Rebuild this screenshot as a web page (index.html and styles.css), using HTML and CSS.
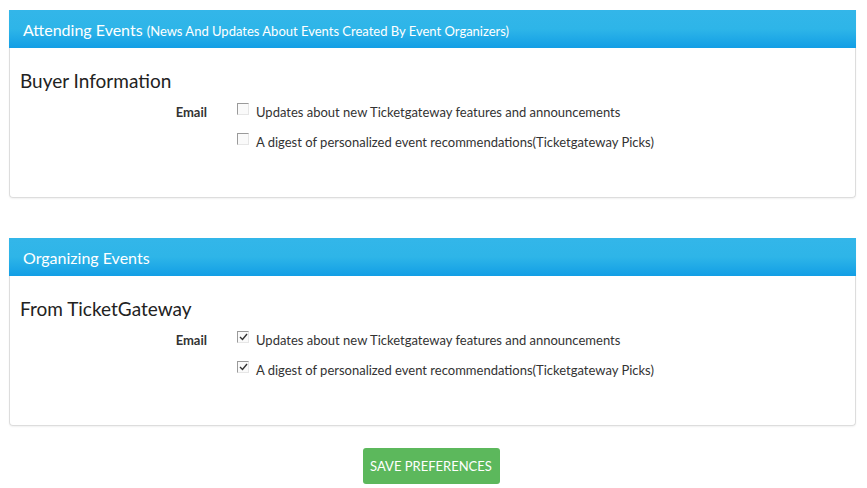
FILE: index.html
```html
<!DOCTYPE html>
<html>
<head>
  <meta charset="UTF-8">
  <title>Notification Preferences</title>
  <link rel="stylesheet" href="styles.css">
</head>
<body>
  <div class="page">
    <div class="panel">
      <div class="panel_head">
        Attending Events <small>(News And Updates About Events Created By Event Organizers)</small>
      </div>
      <div class="panel_body">
        <h3>Buyer Information</h3>
        <div class="pref_row">
          <div class="pref_label">Email</div>
          <div class="pref_opts">
            <label class="opt"><span class="box"></span>Updates about new Ticketgateway features and announcements</label>
            <label class="opt"><span class="box"></span>A digest of personalized event recommendations(Ticketgateway Picks)</label>
          </div>
        </div>
      </div>
    </div>

    <div class="panel">
      <div class="panel_head">Organizing Events</div>
      <div class="panel_body">
        <h3>From TicketGateway</h3>
        <div class="pref_row">
          <div class="pref_label">Email</div>
          <div class="pref_opts">
            <label class="opt"><span class="box"><svg width="9" height="8" viewBox="0 0 9 8"><path d="M1 4 L3.5 6.5 L8 1" fill="none" stroke="#333" stroke-width="1.4"/></svg></span>Updates about new Ticketgateway features and announcements</label>
            <label class="opt"><span class="box"><svg width="9" height="8" viewBox="0 0 9 8"><path d="M1 4 L3.5 6.5 L8 1" fill="none" stroke="#333" stroke-width="1.4"/></svg></span>A digest of personalized event recommendations(Ticketgateway Picks)</label>
          </div>
        </div>
      </div>
    </div>

    <div class="actions">
      <button class="btn_save">SAVE PREFERENCES</button>
    </div>
  </div>
</body>
</html>
```

FILE: styles.css
```css
body {
	margin: 0;
	font-family: "Lato", "Open Sans", sans-serif;
	color: #333;
	background: #fff;
}

.page {
	padding: 10px 11px 0 9px;
}

/*panel styles*/
.panel {
	border: 1px solid #ddd;
	border-top: none;
	border-radius: 0 0 4px 4px;
	box-shadow: 0 1px 2px rgba(0,0,0,0.06);
	margin-bottom: 40px;
}

.panel_head {
	height: 38px;
	box-sizing: border-box;
	margin: 0 -1px;
	padding: 10px 14px;
	line-height: 19px;
	font-size: 16px;
	color: #fff;
	background: linear-gradient(to bottom, #33b6e9 0%, #2eb5e8 50%, #129ee5 100%);
}

.panel_head small {
	font-size: 13px;
}

.panel_body {
	padding: 22px 10px 45px 10px;
}

.panel_body h3 {
	margin: 0 0 10px 0;
	font-size: 19px;
	font-weight: normal;
	line-height: 22px;
	color: #222;
}

/*preference rows*/
.pref_row {
	display: flex;
	font-size: 13px;
}

.pref_label {
	width: 187px;
	text-align: right;
	font-weight: bold;
	line-height: 20px;
	color: #333;
}

.pref_opts {
	margin-left: 30px;
	display: flex;
	flex-direction: column;
	gap: 10px;
}

.opt {
	display: flex;
	align-items: flex-start;
	line-height: 20px;
}

.box {
	width: 12px;
	height: 12px;
	box-sizing: border-box;
	margin: 1px 7px 0 0;
	border-top: 1px solid #9a9a9a;
	border-left: 1px solid #9a9a9a;
	border-right: 1px solid #e6e6e6;
	border-bottom: 1px solid #e6e6e6;
	background: #fafafa;
	display: flex;
	align-items: center;
	justify-content: center;
}

/*button*/
.actions {
	text-align: center;
	margin-top: -18px;
	padding-right: 3px;
}

.btn_save {
	width: 137px;
	height: 36px;
	border: none;
	border-radius: 3px;
	background: #5cb85c;
	color: #fff;
	font-family: "Lato", "Open Sans", sans-serif;
	font-size: 13px;
	padding: 0;
}
```
